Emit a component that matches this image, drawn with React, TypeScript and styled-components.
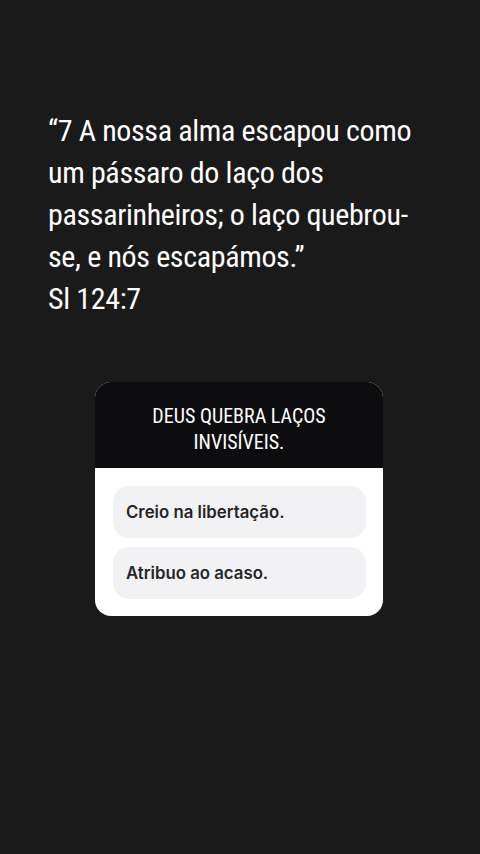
import React from "react";
import styled, { createGlobalStyle } from "styled-components";

const GlobalStyle = createGlobalStyle`
  html, body {
    margin: 0;
    padding: 0;
    background: #1a1a1a;
  }
  #root {
    min-height: 854px;
  }
`;

const Screen = styled.div`
  width: 480px;
  height: 854px;
  background: #1a1a1a;
  display: flex;
  flex-direction: column;
  overflow: hidden;
`;

const Quote = styled.p`
  margin: 110px 0 0 0;
  padding: 0 44px 0 48px;
  color: #ffffff;
  font-family: "Roboto Condensed", "Roboto", sans-serif;
  font-stretch: 75%;
  font-size: 30px;
  line-height: 42px;
  letter-spacing: -0.35px;
  font-weight: 400;
`;

const Card = styled.div`
  width: 288px;
  margin: 62px 0 0 95px;
  border-radius: 16px;
  overflow: hidden;
  background: #ffffff;
  display: flex;
  flex-direction: column;
`;

const CardHeader = styled.div`
  height: 86px;
  box-sizing: border-box;
  padding: 21px 30px 0;
  background: #0d0d0f;
  text-align: center;
  color: #ffffff;
  font-family: "Roboto Condensed", "Roboto", sans-serif;
  font-stretch: 75%;
  font-size: 20px;
  line-height: 26px;
  font-weight: 400;
`;

const Options = styled.div`
  display: flex;
  flex-direction: column;
  gap: 9px;
  padding: 18px 17px 17px 18px;
`;

const Option = styled.div`
  height: 52px;
  border-radius: 16px;
  background: #f2f2f4;
  display: flex;
  align-items: center;
  padding: 0 13px;
  color: #262626;
  font-family: "Inter", "Liberation Sans", sans-serif;
  font-weight: 600;
  font-size: 16.8px;
`;

const answers = ["Creio na libertação.", "Atribuo ao acaso."];

export default function App() {
  return (
    <Screen>
      <GlobalStyle />
      <Quote>
        “7 A nossa alma escapou como um pássaro do laço dos passarinheiros; o laço quebrou-se, e nós escapámos.”
        <br />
        Sl 124:7
      </Quote>
      <Card>
        <CardHeader>
          DEUS QUEBRA LAÇOS
          <br />
          INVISÍVEIS.
        </CardHeader>
        <Options>
          {answers.map((a) => (
            <Option key={a}>{a}</Option>
          ))}
        </Options>
      </Card>
    </Screen>
  );
}
